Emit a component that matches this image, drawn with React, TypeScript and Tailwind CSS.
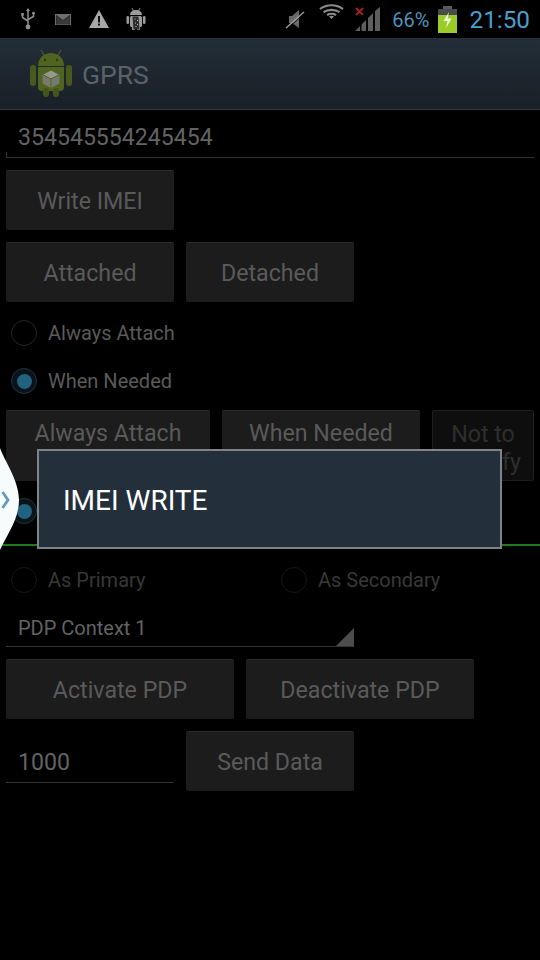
import type { ReactNode } from "react";

const font = { fontFamily: "Roboto, sans-serif" };

function Btn({ w, children }: { w: string; children: ReactNode }) {
  return (
    <div className={`${w} h-[60px] shrink-0 pt-[1px] rounded-[2px] bg-[#1c1c1c] border-t border-[#2a2a2a] flex items-center justify-center text-[23.200px] text-[#5a5a5a]`}>
      {children}
    </div>
  );
}

function Radio({ on, dim }: { on?: boolean; dim?: boolean }) {
  return (
    <div className={`w-[26px] h-[26px] rounded-full border flex items-center justify-center ${dim ? "border-[#161616]" : on ? "border-[#1d3440] bg-[#0a1418]" : "border-[#252525]"}`}>
      {on && <div className="w-[15px] h-[15px] rounded-full bg-[#20627f]" />}
    </div>
  );
}

function RadioRow({ label, on, dim, cls }: { label: string; on?: boolean; dim?: boolean; cls?: string }) {
  return (
    <div className={`h-12 flex items-center gap-[11px] pl-[5px] ${cls ?? ""}`}>
      <Radio on={on} dim={dim} />
      <span className={`text-[20px] ${dim ? "text-[#383838]" : "text-[#5a5a5a]"}`}>{label}</span>
    </div>
  );
}

function StatusLeft() {
  return (
    <div className="flex items-center">
      {/* usb */}
      <svg className="ml-[20px]" width="16" height="22" viewBox="0 0 16 22" fill="none" stroke="#8f8f8f" strokeWidth="1.5">
        <path d="M8 2v16M2.5 7v2.5L8 13M13.5 6v2.5L8 11.5" />
        <path d="M8 0l2 3H6z" fill="#8f8f8f" stroke="none" />
        <circle cx="8" cy="19" r="2.4" fill="#8f8f8f" stroke="none" />
        <rect x="1.2" y="5" width="2.6" height="2.6" fill="#8f8f8f" stroke="none" />
        <circle cx="13.5" cy="5.2" r="1.4" fill="#8f8f8f" stroke="none" />
      </svg>
      {/* gmail */}
      <svg className="ml-[19px]" width="16" height="11" viewBox="0 0 16 11">
        <rect width="16" height="11" fill="#6f6f6f" />
        <path d="M1.5 10.5V1.5L8 6.5l6.5-5v9" fill="#3a3a3a" stroke="#242424" strokeWidth="0.8" />
      </svg>
      {/* warning */}
      <svg className="ml-[18px]" width="20" height="18" viewBox="0 0 20 18">
        <path d="M10 0l10 18H0z" fill="#a8a8a8" />
        <rect x="9" y="6" width="2" height="6.5" fill="#111" />
        <rect x="9" y="13.6" width="2" height="2" fill="#111" />
      </svg>
      {/* android debug */}
      <svg className="ml-[17px]" width="20" height="22" viewBox="0 0 20 22">
        <path d="M6 0l1.5 3M14 0l-1.5 3" stroke="#8f8f8f" strokeWidth="0.9" />
        <path d="M4 7c0-3 2.500-5 6-5s6 2 6 5z" fill="#9a9a9a" />
        <rect x="4" y="8" width="12" height="11" rx="1.500" fill="#9a9a9a" />
        <rect x="0.500" y="8" width="2.600" height="8" rx="1.300" fill="#9a9a9a" />
        <rect x="16.900" y="8" width="2.600" height="8" rx="1.300" fill="#9a9a9a" />
        <rect x="6" y="18" width="3" height="4" fill="#9a9a9a" />
        <rect x="11" y="18" width="3" height="4" fill="#9a9a9a" />
        <path d="M6.500 8.500h6l1 13h-6z" fill="#2b2b2b" />
        <path d="M8.500 11h1M11 12.500h1M9 15h1M11 16.500h1M9.500 18.500h1" stroke="#bbb" strokeWidth="1.100" />
      </svg>
    </div>
  );
}

function StatusRight() {
  return (
    <div className="flex items-center">
      {/* muted speaker */}
      <svg width="20" height="20" viewBox="0 0 20 20">
        <path d="M4 7h3l7-6v18l-7-5H4z" fill="#6a6a6a" />
        <path d="M1 19L19 3" stroke="#a0a0a0" strokeWidth="1.400" />
        <path d="M2 20L19.500 4.500" stroke="#000" strokeWidth="0.800" />
      </svg>
      {/* wifi */}
      <svg className="ml-[14px] mb-[16px]" width="25" height="15" viewBox="0 0 25 15" fill="none" stroke="#8c8c8c" strokeWidth="2.200">
        <path d="M1 5c6.500-5 16.500-5 23 0" />
        <path d="M4.500 8.200c4.500-3.200 11.500-3.200 16 0" />
        <path d="M8 11.200c2.500-1.700 6.500-1.700 9 0" />
        <path d="M12.500 15l-2.500-2.600c1.500-.8 3.500-.8 5 0z" fill="#8c8c8c" stroke="none" />
      </svg>
      {/* signal */}
      <svg className="ml-[11px]" width="25" height="24" viewBox="0 0 25 24">
        <path d="M0 24l5-5v5zM6.500 24V17.500L11 13v11zM13 24V11l5-5v18zM20 24V4l5-4v24z" fill="#5e5e5e" />
        <path d="M1 1l7 7M8 1L1 8" stroke="#a32020" strokeWidth="1.800" />
      </svg>
      <span className="ml-[12px] pt-[2px] text-[20px] text-[#4a94bd]">66%</span>
      {/* battery */}
      <svg className="ml-[9px]" width="19" height="27" viewBox="0 0 19 27">
        <rect x="5" y="0" width="9" height="3" fill="#5a5a5a" />
        <rect x="0" y="3" width="19" height="6" fill="#4a4a4a" />
        <rect x="0" y="9" width="19" height="18" fill="#9acb28" />
        <path d="M11 6L5.500 15h4l-1.500 7 5.500-9.500h-4z" fill="#f2f7e0" />
      </svg>
      <span className="ml-[12px] mr-[10px] pt-[3px] text-[24.300px] text-[#4b9fcc]">21:50</span>
    </div>
  );
}

function AppIcon() {
  return (
    <svg width="42" height="47" viewBox="0 0 42 47">
      <path d="M11 0l3 5M31 0l-3 5" stroke="#4c5a22" strokeWidth="1.200" />
      <path d="M8 16C8 8 14 3 21 3s13 5 13 13z" fill="#4f641f" />
      <path d="M8 17h26v20a4 4 0 0 1-4 4H12a4 4 0 0 1-4-4z" fill="#4f641f" />
      <rect x="0" y="15" width="6" height="21" rx="3" fill="#475a1b" />
      <rect x="36" y="15" width="6" height="21" rx="3" fill="#475a1b" />
      <rect x="13" y="38" width="6" height="9" rx="3" fill="#43551b" />
      <rect x="23" y="38" width="6" height="9" rx="3" fill="#43551b" />
      <circle cx="15" cy="10" r="1.200" fill="#2d3a12" />
      <circle cx="27" cy="10" r="1.200" fill="#2d3a12" />
      <path d="M21 20l8.500 4.500v9L21 38l-8.500-4.500v-9z" fill="#77796d" />
      <path d="M21 29l8.500-4.500-8.500-4.500-8.500 4.500zM21 29v9" fill="#96988c" stroke="#4f641f" strokeWidth="1" />
    </svg>
  );
}

export default function App() {
  return (
    <div className="relative w-[540px] h-[960px] bg-black overflow-hidden" style={font}>
      <div className="h-[38px] flex items-center justify-between">
        <StatusLeft />
        <StatusRight />
      </div>

      <div className="h-[72px] pl-[30px] flex items-center gap-[10px] bg-gradient-to-b from-[#222e38] to-[#192027] border-b border-[#2b3a45]">
        <AppIcon />
        <span className="pt-[3px] text-[26.500px] text-[#5b6268]">GPRS</span>
      </div>

      <div className="px-[6px]">
        <div className="relative h-[48px] flex items-center pl-3 pt-[9px] text-[23.100px] text-[#636363] border-b border-[#333]">
          354545554245454
          <div className="absolute left-0 bottom-0 w-[1px] h-[5px] bg-[#333]" />
        </div>

        <div className="mt-3">
          <Btn w="w-[168px]">Write IMEI</Btn>
        </div>

        <div className="mt-3 flex gap-3">
          <Btn w="w-[168px]">Attached</Btn>
          <Btn w="w-[168px]">Detached</Btn>
        </div>

        <div className="mt-[7px]">
          <RadioRow label="Always Attach" />
          <RadioRow label="When Needed" on />
        </div>

        <div className="mt-[5px] flex gap-3">
          <div className="w-[204px] h-[71px] pb-[25px] rounded-[2px] bg-[#1c1c1c] border-t border-[#2a2a2a] flex items-center justify-center text-[23.200px] text-[#5a5a5a]">
            Always Attach
          </div>
          <div className="w-[198px] h-[71px] pb-[25px] rounded-[2px] bg-[#1c1c1c] border-t border-[#2a2a2a] flex items-center justify-center text-[23.200px] text-[#5a5a5a]">
            When Needed
          </div>
          <div className="w-[102px] h-[71px] pt-[5px] rounded-[2px] bg-[#0e0e0e] border border-[#1e1e1e] flex items-center justify-center text-center text-[23.200px] leading-[28px] text-[#2e2e2e]">
            Not to Specify
          </div>
        </div>

        <div className="mt-[6px] h-12 flex items-center pl-[5px]">
          <Radio on />
        </div>
      </div>

      <div className="mt-[9px] h-[2px] bg-[#1d7a1d]" />

      <div className="px-[6px]">
        <div className="mt-[10px] flex">
          <RadioRow label="As Primary" dim cls="w-[270px]" />
          <RadioRow label="As Secondary" dim />
        </div>

        <div className="relative w-[348px] h-[43px] pl-3 pt-[11px] text-[20px] leading-[26px] text-[#636363] border-b border-[#333]">
          PDP Context 1
          <div className="absolute right-0 bottom-0 w-[18px] h-[18px] bg-[#4d4d4d] [clip-path:polygon(100%_0,100%_100%,0_100%)]" />
        </div>

        <div className="mt-3 flex gap-3">
          <Btn w="w-[228px]">Activate PDP</Btn>
          <Btn w="w-[228px]">Deactivate PDP</Btn>
        </div>

        <div className="mt-3 flex gap-3">
          <div className="w-[168px] h-[52px] pl-3 flex items-center pt-[13px] text-[23.100px] text-[#636363] border-b border-[#333]">
            1000
          </div>
          <Btn w="w-[168px]">Send Data</Btn>
        </div>
      </div>

      {/* toast */}
      <div className="absolute left-[37px] top-[449px] w-[465px] h-[100px] pl-[24px] pt-[4px] flex items-center bg-[#23303c] border-2 border-[#7f8586] text-[28px] text-white">
        IMEI WRITE
      </div>

      {/* side handle */}
      <svg className="absolute left-0 top-[448px]" width="20" height="102" viewBox="0 0 20 102">
        <path d="M0 0C4 12 19 32 19 52C19 72 6 88 0 102z" fill="#f8fbfb" />
        <path d="M2.500 44l5.500 8-5.500 8" fill="none" stroke="#5f9cbc" strokeWidth="2.800" />
      </svg>
    </div>
  );
}
